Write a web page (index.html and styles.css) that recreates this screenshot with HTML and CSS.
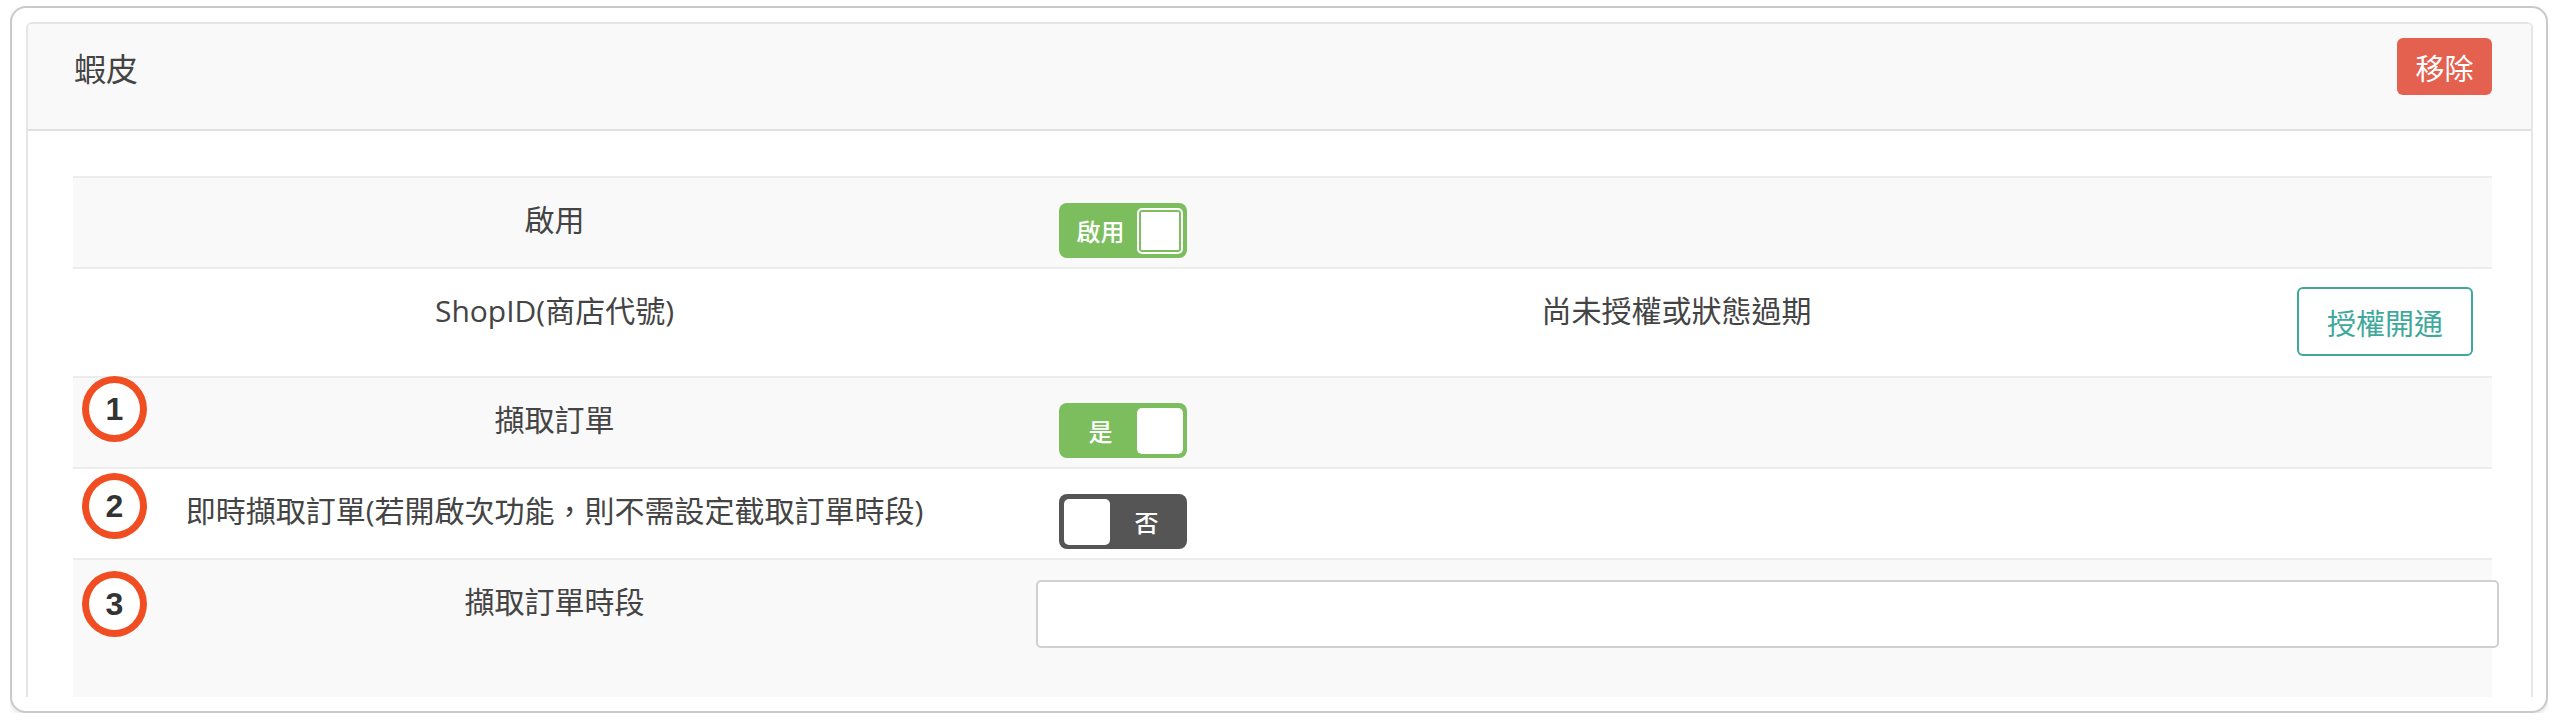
FILE: index.html
```html
<!DOCTYPE html>
<html lang="zh-Hant">
<head>
  <meta charset="UTF-8" />
  <title>蝦皮</title>
  <link rel="stylesheet" href="styles.css">
</head>
<body>

  <div class="card">
    <div class="panel">
      <div class="panel-heading">
        <span class="panel-title">蝦皮</span>
        <button class="btn-remove">移除</button>
      </div>

      <div class="panel-body">
        <div class="settings">
          <div class="row row-switch">
            <div class="label">啟用</div>
            <div class="value">
              <div class="switch on focused">
                <span class="switch-text">啟用</span>
                <span class="knob"></span>
              </div>
            </div>
          </div>

          <div class="row row-shop">
            <div class="label">ShopID(商店代號)</div>
            <div class="value shop">
              <span class="shop-status">尚未授權或狀態過期</span>
              <button class="btn-auth">授權開通</button>
            </div>
          </div>

          <div class="row row-switch">
            <span class="marker marker-1">1</span>
            <div class="label">擷取訂單</div>
            <div class="value">
              <div class="switch on">
                <span class="switch-text">是</span>
                <span class="knob"></span>
              </div>
            </div>
          </div>

          <div class="row row-switch">
            <span class="marker marker-2">2</span>
            <div class="label">即時擷取訂單(若開啟次功能，則不需設定截取訂單時段)</div>
            <div class="value">
              <div class="switch off">
                <span class="knob"></span>
                <span class="switch-text">否</span>
              </div>
            </div>
          </div>

          <div class="row row-input">
            <span class="marker marker-3">3</span>
            <div class="label">擷取訂單時段</div>
            <div class="value">
              <input type="text" class="form-control">
            </div>
          </div>
        </div>
      </div>
    </div>
  </div>

</body>
</html>
```

FILE: styles.css
```css
* {
  box-sizing: border-box;
}

body {
  margin: 6px 12px 0 10px;
  background: #fff;
  font-family: "Open Sans", "Noto Sans CJK TC", sans-serif;
  color: #444;
}

.card {
  height: 707px;
  border: 2px solid #c9c9c9;
  border-radius: 16px;
  padding: 14px 13px 14px 14px;
  box-shadow: 0 2px 4px rgba(0, 0, 0, 0.12);
  overflow: hidden;
}

.panel {
  height: 100%;
  border: 2px solid #e6e6e6;
  border-bottom: none;
  border-radius: 6px 6px 0 0;
  overflow: hidden;
}

.panel-heading {
  display: flex;
  align-items: center;
  justify-content: space-between;
  background: #f9f9f9;
  border-bottom: 2px solid #e0e0e0;
  padding: 14px 39px 34px 46px;
}

.panel-title {
  font-size: 32px;
  color: #444;
}

.btn-remove {
  width: 95px;
  height: 57px;
  border: none;
  border-radius: 6px;
  background: #e4604f;
  color: #fff;
  font-family: "Noto Sans CJK TC", sans-serif;
  font-size: 29px;
  padding: 0;
}

.panel-body {
  padding: 45px 39px 0 45px;
}

/* setting rows */
.row {
  position: relative;
  display: grid;
  grid-template-columns: 963px 1fr;
  border-top: 2px solid #ececec;
  background: #fff;
}

.row:nth-child(odd) {
  background: #f9f9f9;
}

.label {
  text-align: center;
  font-size: 30px;
  line-height: 48px;
  padding-top: 18px;
}

.row-switch .value {
  padding: 25px 0 9px 23px;
}

.row-shop .value {
  padding: 18px 19px 20px 0;
}

.row-input .value {
  padding: 20px 0 49px 0;
}

.shop {
  display: flex;
  align-items: flex-start;
}

.shop-status {
  flex: 1;
  text-align: center;
  padding-left: 20px;
  font-size: 30px;
  line-height: 48px;
}

.btn-auth {
  width: 176px;
  height: 69px;
  border: 2px solid #3ea99b;
  border-radius: 6px;
  background: #fff;
  color: #3ea99b;
  font-family: "Noto Sans CJK TC", sans-serif;
  font-size: 29px;
  padding: 0;
}

/* toggle switch */
.switch {
  display: flex;
  align-items: center;
  width: 128px;
  height: 55px;
  border-radius: 8px;
  padding: 0 4px 0 5px;
  color: #fff;
}

.switch.on {
  background: #7cbd5e;
}

.switch.off {
  background: #555;
}

.switch-text {
  flex: 1;
  text-align: center;
  font-family: "Noto Sans CJK TC", sans-serif;
  font-size: 24px;
  font-weight: 500;
}

.knob {
  width: 46px;
  height: 46px;
  border-radius: 5px;
  background: #fff;
}

.switch.focused .knob {
  border: 2px solid #fff;
  box-shadow: inset 0 0 0 2px #7cbd5e;
}

.form-control {
  display: block;
  width: calc(100% + 7px);
  height: 68px;
  border: 2px solid #d0d0d0;
  border-radius: 5px;
  background: #fff;
  font-size: 28px;
}

/* numbered annotations */
.marker {
  position: absolute;
  left: 9px;
  width: 65px;
  height: 66px;
  border: 7px solid #f04d22;
  border-radius: 50%;
  background: #fff;
  display: flex;
  align-items: center;
  justify-content: center;
  font-family: "Liberation Sans", sans-serif;
  font-weight: bold;
  font-size: 32px;
  color: #333;
}

.marker-1 {
  top: -2px;
}

.marker-2 {
  top: 4px;
}

.marker-3 {
  top: 11px;
}
```
